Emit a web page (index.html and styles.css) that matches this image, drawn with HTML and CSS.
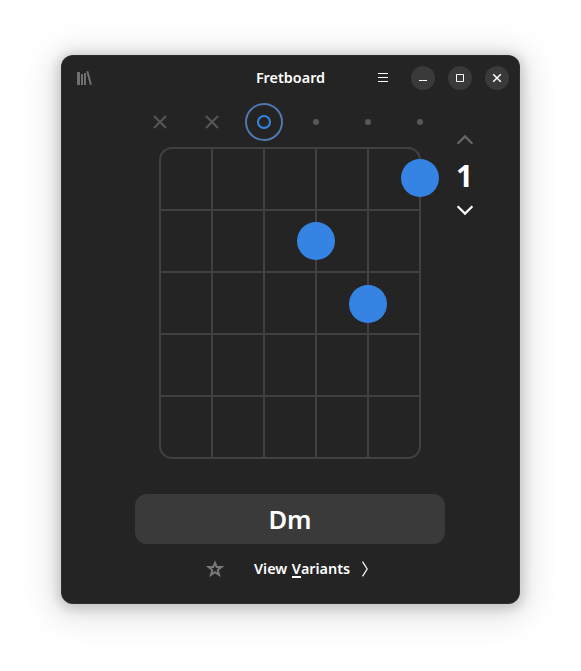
FILE: index.html
```html
<!DOCTYPE html>
<html lang="en">
<head>
<meta charset="utf-8">
<title>Fretboard</title>
<link rel="stylesheet" href="styles.css">
</head>
<body>
<div class="window">
  <header class="headerbar">
    <button class="flat library" aria-label="Library">
      <svg width="16" height="16" viewBox="0 0 16 16"><path fill="currentColor" d="M0 2h3v13H0zM4 4h2v11H4zM7 3h2v12H7z"/><path d="M10.3 1.3 13.9 14.7" stroke="currentColor" stroke-width="2"/></svg>
    </button>
    <h1 class="title"><span>Fretboard</span></h1>
    <div class="controls">
      <button class="flat menu" aria-label="Menu">
        <svg width="16" height="16" viewBox="0 0 16 16"><path fill="currentColor" d="M3 3h10v1H3zM3 7h10v1H3zM3 11h10v1H3z"/></svg>
      </button>
      <button class="round" aria-label="Minimize">
        <svg width="16" height="16" viewBox="0 0 16 16"><path fill="currentColor" d="M4 10h8v1H4z"/></svg>
      </button>
      <button class="round" aria-label="Maximize">
        <svg width="16" height="16" viewBox="0 0 16 16"><path fill="none" stroke="currentColor" d="M4.5 4.5h7v7h-7z"/></svg>
      </button>
      <button class="round" aria-label="Close">
        <svg width="16" height="16" viewBox="0 0 16 16"><path stroke="currentColor" stroke-width="1.5" d="M4.2 4.2l7.6 7.6M11.8 4.2l-7.6 7.6"/></svg>
      </button>
    </div>
  </header>

  <main class="chord">
    <div class="board">
      <div class="strings">
        <button class="string"><svg width="16" height="16" viewBox="0 0 16 16"><path d="M2 2l12 12M14 2L2 14"/></svg></button>
        <button class="string"><svg width="16" height="16" viewBox="0 0 16 16"><path d="M2 2l12 12M14 2L2 14"/></svg></button>
        <button class="string open"><svg width="38" height="38" viewBox="0 0 38 38"><circle class="focus" cx="19" cy="19" r="18"/><circle cx="19" cy="19" r="6"/></svg></button>
        <button class="string"><i class="dot"></i></button>
        <button class="string"><i class="dot"></i></button>
        <button class="string"><i class="dot"></i></button>
      </div>
      <svg class="frets" width="312" height="312" viewBox="0 0 312 312">
        <rect x="26" y="1" width="260" height="310" rx="12"/>
        <path d="M78 1v310M130 1v310M182 1v310M234 1v310M26 63h260M26 125h260M26 187h260M26 249h260"/>
        <circle cx="286" cy="31" r="19"/>
        <circle cx="182" cy="94" r="19"/>
        <circle cx="234" cy="157" r="19"/>
      </svg>
    </div>
    <div class="position">
      <button class="flat step off" aria-label="Previous fret"><svg width="18" height="12" viewBox="0 0 18 12"><path d="M1.6 9.7 9 2.4l7.4 7.3"/></svg></button>
      <span class="number">1</span>
      <button class="flat step" aria-label="Next fret"><svg width="18" height="12" viewBox="0 0 18 12"><path d="M1.6 2.3 9 9.6l7.4-7.3"/></svg></button>
    </div>
  </main>

  <div class="name"><span>Dm</span></div>

  <footer class="actions">
    <button class="flat star" aria-label="Bookmark">
      <svg width="18" height="18" viewBox="0 0 18 18"><path d="M9 2.8 10.7 7h4.7l-3.7 3.1 1.4 4.7L9 12.1l-4.1 2.7 1.4-4.7L2.6 7h4.7z"/></svg>
    </button>
    <button class="flat variants">
      <span class="label">View <span class="key">V</span>ariants</span>
      <svg width="8" height="16" viewBox="0 0 8 16"><path d="M1.5 .6 6.2 8 1.5 15.4"/></svg>
    </button>
  </footer>
</div>
</body>
</html>
```

FILE: styles.css
```css
* { box-sizing: border-box; }

body {
  margin: 0;
  padding: 55px 0 0 61px;
  height: 671px;
  overflow: hidden;
  background: #fff;
  color: #fff;
  font-family: "Noto Sans", "Open Sans", sans-serif;
}

button {
  display: flex;
  align-items: center;
  justify-content: center;
  margin: 0;
  padding: 0;
  border: 0;
  background: none;
  color: inherit;
  font: inherit;
}

svg { display: block; }

.window {
  width: 459px;
  height: 549px;
  border-radius: 12px;
  background: #242424;
  box-shadow: inset 0 0 0 1px rgba(255, 255, 255, .04), 0 2px 12px 3px rgba(0, 0, 0, .17), 0 5px 32px 10px rgba(0, 0, 0, .11);
}

.headerbar {
  display: grid;
  grid-template-columns: 150px 159px 150px;
  align-items: center;
  height: 46px;
}

.library {
  margin-left: 16px;
  width: 16px;
  height: 16px;
  color: #707070;
}

.title {
  margin: 0;
  font-size: 14.4px;
  font-weight: 600;
  line-height: 20px;
  text-align: center;
}

.controls {
  display: flex;
  align-items: center;
  justify-content: flex-end;
  gap: 13px;
  padding-right: 11px;
}

.menu {
  width: 24px;
  height: 24px;
  margin-right: 3px;
}

.round {
  width: 24px;
  height: 24px;
  border-radius: 50%;
  background: #3a3a3a;
}

.chord {
  display: flex;
  margin: 2px 0 0 73px;
}

.strings {
  display: grid;
  grid-template-columns: repeat(6, 52px);
  height: 38px;
  margin-bottom: 6px;
}

.string path {
  stroke: #565656;
  stroke-width: 2.2;
}

.string circle {
  fill: none;
  stroke: #3584e4;
  stroke-width: 2;
}

.string .focus { stroke: #4f78ae; }

.dot {
  width: 6px;
  height: 6px;
  border-radius: 50%;
  background: #585858;
}

.frets rect,
.frets path {
  fill: none;
  stroke: #414141;
  stroke-width: 2;
}

.frets circle { fill: #3584e4; }

.position {
  display: flex;
  flex-direction: column;
  align-items: center;
  width: 38px;
  padding-top: 31px;
}

.step path {
  fill: none;
  stroke: #fff;
  stroke-width: 2.2;
}

.off path { stroke: #666; }

.number {
  height: 58px;
  margin-right: 1px;
  font-size: 30px;
  font-weight: 700;
  line-height: 60px;
}

.name {
  width: 310px;
  height: 50px;
  margin: 35px 0 0 74px;
  border-radius: 12px;
  background: #3a3a3a;
  font-size: 25.5px;
  font-weight: 600;
  line-height: 51px;
  text-align: center;
}

.actions {
  display: flex;
  align-items: center;
  height: 34px;
  margin: 8px 0 0 145px;
}

.star path {
  fill: none;
  stroke: #777;
  stroke-width: 2;
}

.variants {
  gap: 11px;
  margin-left: 30px;
  font-size: 14.4px;
  font-weight: 600;
  white-space: nowrap;
}

.label {
  line-height: 20px;
  word-spacing: .8px;
}

.key {
  display: inline-block;
  height: 19px;
  line-height: 20px;
  vertical-align: top;
  border-bottom: 2px solid #fff;
}

.variants path {
  fill: none;
  stroke: #fff;
  stroke-width: 1.2;
}
```
